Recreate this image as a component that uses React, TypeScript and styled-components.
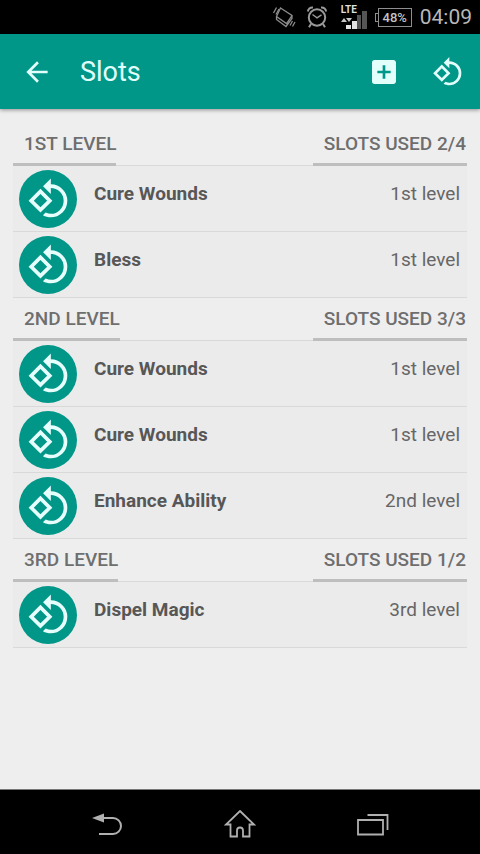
import React from "react";
import styled, { createGlobalStyle } from "styled-components";
import { MdAddBox, MdArrowBack, MdRotate90DegreesCcw } from "react-icons/md";

const GlobalStyle = createGlobalStyle`
  * { box-sizing: border-box; }
  body {
    margin: 0;
    background: #000;
    font-family: Roboto, "Open Sans", sans-serif;
  }
`;

const Screen = styled.div`
  display: flex;
  flex-direction: column;
  min-height: 100vh;
  background: #eeeeee;
`;

const StatusBar = styled.div`
  display: flex;
  align-items: center;
  justify-content: flex-end;
  height: 34px;
  padding-right: 8px;
  background: #000;
  color: #b4b4b4;
`;

const StatusIcon = styled.svg<{ $gap: number }>`
  display: block;
  flex: none;
  margin-right: ${(p) => p.$gap}px;
`;

const Network = styled.div`
  display: flex;
  flex-direction: column;
  width: 27px;
  height: 23px;
  margin-right: 7px;
  color: #dedede;
`;

const NetworkLabel = styled.span`
  font-size: 10px;
  font-weight: 700;
  line-height: 8px;
`;

const SignalBars = styled.svg`
  display: block;
  margin-top: -6px;
`;

const Battery = styled.div`
  display: flex;
  align-items: center;
  margin-right: 8px;
`;

const BatteryTip = styled.span`
  width: 3px;
  height: 9px;
  border: 1px solid #8e8e8e;
  border-right: 0;
`;

const BatteryBody = styled.span`
  display: flex;
  align-items: center;
  justify-content: center;
  width: 34px;
  height: 19px;
  border: 1px solid #8e8e8e;
  color: #c4c4c4;
  font-size: 13px;
  font-weight: 500;
`;

const Clock = styled.time`
  color: #b8b8b8;
  font-size: 21px;
  line-height: 34px;
`;

const AppBar = styled.header`
  display: flex;
  align-items: center;
  height: 75px;
  padding: 0 16px 0 21px;
  background: #009688;
  color: #e2fffb;
  box-shadow: 0 1px 4px rgba(0, 0, 0, 0.4);
`;

const Title = styled.h1`
  flex: 1;
  margin: 0 0 0 27px;
  font-size: 27px;
  font-weight: 400;
  line-height: 36px;
`;

const IconButton = styled.button`
  display: flex;
  flex: none;
  padding: 0;
  border: 0;
  background: none;
  color: inherit;
  cursor: pointer;
`;

const Actions = styled.div`
  display: flex;
  align-items: center;
  gap: 32px;
`;

const Content = styled.main`
  flex: 1;
  padding: 14px 13px;
`;

const LevelHeader = styled.div`
  display: flex;
  justify-content: space-between;
  height: 43px;
  border-bottom: 1px solid #d9d9d9;
`;

const LevelLabel = styled.h2`
  height: 43px;
  margin: 0;
  padding: 0 0 0 11px;
  border-bottom: 3px solid #bebebe;
  color: #6e6e6e;
  font-size: 19px;
  font-weight: 500;
  line-height: 42px;
`;

const SlotsUsed = styled(LevelLabel).attrs({ as: "p" })`
  padding-right: 1px;
`;

const SpellList = styled.ul`
  margin: 0;
  padding: 0;
  list-style: none;
`;

const SpellRow = styled.li`
  display: flex;
  height: 66px;
  padding: 4px 7px 0 6px;
  border-bottom: 1px solid #d9d9d9;
  background: #ebebeb;
  line-height: 47px;
`;

const SpellName = styled.span`
  flex: 1;
  margin-left: 17px;
  color: #575757;
  font-size: 19px;
  font-weight: 700;
`;

const SpellLevel = styled.span`
  color: #666;
  font-size: 19px;
`;

const CastButton = styled(IconButton)`
  width: 58px;
  height: 58px;
  padding-left: 2px;
  align-items: center;
  justify-content: center;
  border-radius: 50%;
  background: #009688;
  color: #e6fffc;
`;

const NavBar = styled.nav`
  display: flex;
  align-items: center;
  justify-content: space-between;
  height: 65px;
  padding: 6px 19% 0;
  border-top: 1px solid #777;
  background: #000;
  color: #b0b0b0;
`;

interface Level {
  title: string;
  used: string;
  spells: { name: string; level: string }[];
}

const levels: Level[] = [
  {
    title: "1ST LEVEL",
    used: "SLOTS USED 2/4",
    spells: [
      { name: "Cure Wounds", level: "1st level" },
      { name: "Bless", level: "1st level" },
    ],
  },
  {
    title: "2ND LEVEL",
    used: "SLOTS USED 3/3",
    spells: [
      { name: "Cure Wounds", level: "1st level" },
      { name: "Cure Wounds", level: "1st level" },
      { name: "Enhance Ability", level: "2nd level" },
    ],
  },
  {
    title: "3RD LEVEL",
    used: "SLOTS USED 1/2",
    spells: [{ name: "Dispel Magic", level: "3rd level" }],
  },
];

function Status() {
  return (
    <StatusBar>
      <StatusIcon $gap={10} width="24" height="24" viewBox="0 0 24 24" fill="none" stroke="#8c8c8c" strokeWidth="1.3" aria-hidden="true">
        <path d="M8.500 3 20 10.500 14.500 18.500 4.500 11.500ZM4.500 11.500v3L14 21.500 20 13.500v-3" />
        <path d="M1.500 8 4.500 2.500M4 9.500 7 4M18 20.500 20.500 16M20.500 21.500 23 17" />
      </StatusIcon>
      <StatusIcon $gap={13} width="22" height="24" viewBox="0 0 22 24" fill="none" stroke="#999" strokeWidth="2" aria-hidden="true">
        <circle cx="11" cy="12.5" r="8.2" />
        <path d="M1.8 6.5A5 5 0 0 1 7 2.6M15 2.6a5 5 0 0 1 5.2 3.9M5 19l-2 3.3M17 19l2 3.3" />
        <path d="M6.5 9.5 11 12.8l4.5-3" strokeWidth="1.4" />
      </StatusIcon>
      <Network>
        <NetworkLabel>LTE</NetworkLabel>
        <SignalBars width="27" height="21" viewBox="0 0 27 21" aria-hidden="true">
          <path d="M0 14h6L3 10zM5 10h6l-3 4z" fill="#c8c8c8" />
          <path d="M5 17h5v4H5zM11 13h5v8h-5z" fill="#e2e2e2" />
          <path d="M16 7h4v14h-4zM21 3h5v18h-5z" fill="#555" />
        </SignalBars>
      </Network>
      <Battery>
        <BatteryTip />
        <BatteryBody>48%</BatteryBody>
      </Battery>
      <Clock>04:09</Clock>
    </StatusBar>
  );
}

export default function App() {
  return (
    <Screen>
      <GlobalStyle />
      <Status />
      <AppBar>
        <IconButton aria-label="Back">
          <MdArrowBack size={32} />
        </IconButton>
        <Title>Slots</Title>
        <Actions>
          <IconButton aria-label="Add slot">
            <MdAddBox size={32} />
          </IconButton>
          <IconButton aria-label="Reset slots">
            <MdRotate90DegreesCcw size={32} />
          </IconButton>
        </Actions>
      </AppBar>
      <Content>
        {levels.map((level) => (
          <section key={level.title}>
            <LevelHeader>
              <LevelLabel>{level.title}</LevelLabel>
              <SlotsUsed>{level.used}</SlotsUsed>
            </LevelHeader>
            <SpellList>
              {level.spells.map((spell, index) => (
                <SpellRow key={index}>
                  <CastButton aria-label={`Restore ${spell.name}`}>
                    <MdRotate90DegreesCcw size={44} />
                  </CastButton>
                  <SpellName>{spell.name}</SpellName>
                  <SpellLevel>{spell.level}</SpellLevel>
                </SpellRow>
              ))}
            </SpellList>
          </section>
        ))}
      </Content>
      <NavBar>
        <IconButton aria-label="System back">
          <svg width="32" height="28" viewBox="0 0 32 28" fill="none" stroke="currentColor" strokeWidth="2">
            <path d="M13 7h9a8 8 0 0 1 0 16H8" />
            <path d="M1 7 13 2.500v9z" fill="currentColor" stroke="none" />
          </svg>
        </IconButton>
        <IconButton aria-label="Home">
          <svg width="32" height="30" viewBox="0 0 32 30" fill="none" stroke="currentColor" strokeWidth="1.8">
            <path d="M16 1 30 14.500h-4.500V26.500H19v-6a3 3 0 0 0-6 0v6H6.500V14.500H2z" />
          </svg>
        </IconButton>
        <IconButton aria-label="Recent apps">
          <svg width="32" height="28" viewBox="0 0 32 28" fill="none" stroke="currentColor" strokeWidth="1.8">
            <path d="M1 9h25v14.500H1zM10.500 4H30.500v15" />
          </svg>
        </IconButton>
      </NavBar>
    </Screen>
  );
}
